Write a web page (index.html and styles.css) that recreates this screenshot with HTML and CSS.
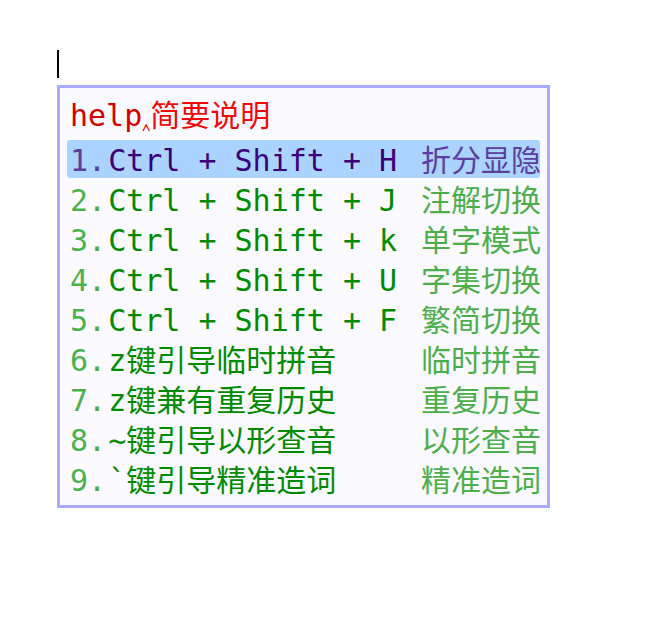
FILE: index.html
```html
<!DOCTYPE html>
<html lang="zh-CN">
<head>
  <meta charset="utf-8">
  <title>help 简要说明</title>
  <link rel="stylesheet" href="styles.css">
</head>
<body>
  <div class="editor">
    <div class="caret"></div>

    <!-- 候选窗 -->
    <div class="candidate-box">
      <div class="preedit">
        <span class="preedit-code">help</span><span class="preedit-mark">‸</span><span class="preedit-text">简要说明</span>
      </div>
      <ul class="candidate-list">
        <li class="candidate highlighted">
          <span class="cand-text"><span class="cand-label">1.</span>Ctrl + Shift + H</span>
          <span class="cand-comment">折分显隐</span>
        </li>
        <li class="candidate">
          <span class="cand-text"><span class="cand-label">2.</span>Ctrl + Shift + J</span>
          <span class="cand-comment">注解切换</span>
        </li>
        <li class="candidate">
          <span class="cand-text"><span class="cand-label">3.</span>Ctrl + Shift + k</span>
          <span class="cand-comment">单字模式</span>
        </li>
        <li class="candidate">
          <span class="cand-text"><span class="cand-label">4.</span>Ctrl + Shift + U</span>
          <span class="cand-comment">字集切换</span>
        </li>
        <li class="candidate">
          <span class="cand-text"><span class="cand-label">5.</span>Ctrl + Shift + F</span>
          <span class="cand-comment">繁简切换</span>
        </li>
        <li class="candidate">
          <span class="cand-text"><span class="cand-label">6.</span>z键引导临时拼音</span>
          <span class="cand-comment">临时拼音</span>
        </li>
        <li class="candidate">
          <span class="cand-text"><span class="cand-label">7.</span>z键兼有重复历史</span>
          <span class="cand-comment">重复历史</span>
        </li>
        <li class="candidate">
          <span class="cand-text"><span class="cand-label">8.</span>~键引导以形查音</span>
          <span class="cand-comment">以形查音</span>
        </li>
        <li class="candidate">
          <span class="cand-text"><span class="cand-label">9.</span>`键引导精准造词</span>
          <span class="cand-comment">精准造词</span>
        </li>
      </ul>
    </div>
  </div>
</body>
</html>
```

FILE: styles.css
```css
body {
  margin: 0;
  background: #fff;
  font-family: 'DejaVu Sans Mono', 'Noto Sans CJK SC', monospace;
}

.editor {
  padding: 50px 0 0 57px;
}

/* 文本光标 */
.caret {
  width: 2px;
  height: 28px;
  background: #000;
  margin-bottom: 7px;
}

.candidate-box {
  box-sizing: border-box;
  width: 493px;
  border: 3px solid #aaaaff;
  background: #fafaff;
  padding: 6px 7px 7px 7px;
}

.preedit {
  box-sizing: border-box;
  height: 38px;
  padding-top: 3px;
  line-height: 38px;
  font-size: 30px;
  padding-left: 3px;
  margin-bottom: 8px;
  white-space: nowrap;
}

.preedit-code {
  color: #d40000;
}

.preedit-mark {
  font-size: 21px;
  color: #e00000;
}

.preedit-text {
  color: #ee0a0a;
}

.candidate-list {
  list-style: none;
  margin: 0;
  padding: 0;
  display: flex;
  flex-direction: column;
  gap: 2px;
}

.candidate {
  box-sizing: border-box;
  display: grid;
  grid-template-columns: 1fr 119px;
  height: 38px;
  padding-top: 2px;
  line-height: 38px;
  font-size: 30px;
  padding-left: 3px;
  border-radius: 3px;
  white-space: nowrap;
}

.cand-text {
  color: #008a00;
}

.cand-label {
  margin-right: 2px;
  color: #4db04d;
}

.cand-comment {
  color: #4caf4c;
}

/* 高亮候选 */
.candidate.highlighted {
  background: #aad4ff;
}

.candidate.highlighted .cand-text {
  color: #3c0078;
}

.candidate.highlighted .cand-label,
.candidate.highlighted .cand-comment {
  color: #5c3e9e;
}
```
